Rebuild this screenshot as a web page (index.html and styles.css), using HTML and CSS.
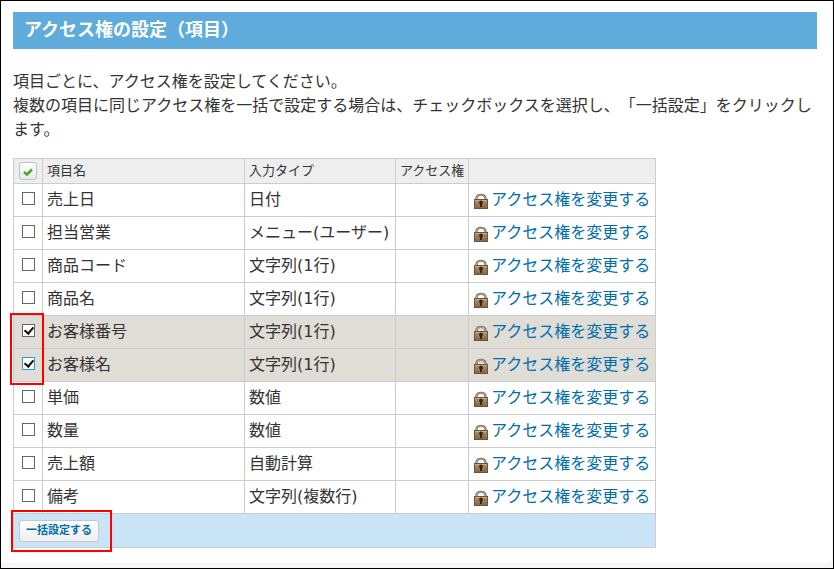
FILE: index.html
```html
<!DOCTYPE html>
<html lang="ja">
<head>
    <meta charset="UTF-8">
    <title>アクセス権の設定（項目）</title>
    <meta name="viewport" content="width=device-width, initial-scale=1.0">
    <link rel="stylesheet" href="styles.css">
</head>
<body>

    <!-- 鍵アイコン -->
    <svg class="icon-defs" aria-hidden="true">
        <defs>
            <linearGradient id="lockBody" x1="0" y1="0" x2="0" y2="1">
                <stop offset="0" stop-color="#b4936c"/>
                <stop offset="1" stop-color="#87643f"/>
            </linearGradient>
            <symbol id="lock" viewBox="0 0 16 16">
                <path d="M3.5 8V5.5C3.5 0.7 12.5 0.7 12.5 5.5V8" fill="none" stroke="#7a6d5c" stroke-width="2.4"/>
                <path d="M3.5 8V5.5C3.5 0.9 12.5 0.9 12.5 5.5V8" fill="none" stroke="#c2b9ac" stroke-width="0.9"/>
                <rect x="1.5" y="6.5" width="13" height="9" fill="url(#lockBody)" stroke="#6e5438"/>
                <path d="M2 7.5H14" stroke="#d0b28b" stroke-width="0.8"/>
                <path d="M8 7.5a2 2 0 0 1 1 3.7V14H7v-2.8A2 2 0 0 1 8 7.5z" fill="#33261a"/>
            </symbol>
        </defs>
    </svg>

    <main class="panel">
        <h1>アクセス権の設定（項目）</h1>

        <p class="description">
            項目ごとに、アクセス権を設定してください。<br>
            複数の項目に同じアクセス権を一括で設定する場合は、チェックボックスを選択し、「一括設定」をクリックします。
        </p>

        <form>
            <table class="fields">
                <colgroup>
                    <col class="col-check">
                    <col class="col-name">
                    <col class="col-type">
                    <col class="col-access">
                    <col class="col-action">
                </colgroup>
                <thead>
                    <tr>
                        <th>
                            <button type="button" class="check-all" id="checkAll" aria-label="すべて選択">
                                <svg width="10" height="8" viewBox="0 0 10 8"><path d="M1 4l3 2.5L9 1.5" fill="none" stroke="#4da61e" stroke-width="2.6"/></svg>
                            </button>
                        </th>
                        <th>項目名</th>
                        <th>入力タイプ</th>
                        <th>アクセス権</th>
                        <th></th>
                    </tr>
                </thead>
                <tbody id="fieldRows"></tbody>
                <tfoot>
                    <tr>
                        <td colspan="5">
                            <button type="button" class="bulk-button">一括設定する</button>
                            <span class="marker marker-button"></span>
                        </td>
                    </tr>
                </tfoot>
            </table>
        </form>
    </main>

    <script>
        const fields = [
            { name: "売上日", type: "日付" },
            { name: "担当営業", type: "メニュー(ユーザー)" },
            { name: "商品コード", type: "文字列(1行)" },
            { name: "商品名", type: "文字列(1行)" },
            { name: "お客様番号", type: "文字列(1行)", checked: true, marker: true },
            { name: "お客様名", type: "文字列(1行)", checked: true, active: true },
            { name: "単価", type: "数値" },
            { name: "数量", type: "数値" },
            { name: "売上額", type: "自動計算" },
            { name: "備考", type: "文字列(複数行)" }
        ];

        const fieldRows = document.getElementById('fieldRows');

        fields.forEach((field, index) => {
            const row = document.createElement('tr');
            row.className = field.checked ? 'selected' : '';
            row.innerHTML = `
                <td class="check">
                    <input type="checkbox" id="field${index}" class="${field.active ? 'active' : ''}" ${field.checked ? 'checked' : ''}>
                    ${field.marker ? '<span class="marker marker-checks"></span>' : ''}
                </td>
                <td><label for="field${index}">${field.name}</label></td>
                <td>${field.type}</td>
                <td></td>
                <td><a href="#"><svg class="lock"><use href="#lock"/></svg>アクセス権を変更する</a></td>
            `;
            fieldRows.appendChild(row);
        });

        const boxes = fieldRows.querySelectorAll('input');

        boxes.forEach(box => {
            box.addEventListener('change', () => {
                box.closest('tr').classList.toggle('selected', box.checked);
            });
        });

        document.getElementById('checkAll').addEventListener('click', () => {
            boxes.forEach(box => {
                box.checked = true;
                box.closest('tr').classList.add('selected');
            });
        });
    </script>

</body>
</html>
```
FILE: styles.css
```css
* {
    box-sizing: border-box;
}

body {
    margin: 0;
    min-height: 100vh;
    padding-bottom: 5px;
    border: 1px solid #000;
    background: #f6f6f6;
    color: #333;
    font-family: "DejaVu Sans", "Noto Sans CJK JP", sans-serif;
    font-size: 16px;
    line-height: 24px;
    text-spacing-trim: space-all;
}

.icon-defs {
    position: absolute;
    width: 0;
    height: 0;
}

.panel {
    background: #fff;
    border-radius: 0 0 6px 0;
    margin-right: 1px;
    padding: 11px 15px 15px 12px;
}

h1 {
    margin: 0 0 21px;
    padding: 6px 11px 7px;
    background: #5eabdc;
    color: #fff;
    font-size: 18px;
    line-height: 24px;
}

.description {
    margin: 0 -1px 16px 0;
}

.fields {
    border-collapse: collapse;
    table-layout: fixed;
    width: 643px;
}

.col-check {
    width: 29px;
}

.col-name {
    width: 202px;
}

.col-type {
    width: 151px;
}

.col-access {
    width: 73px;
}

th,
td {
    height: 33px;
    padding: 0 4px 1px;
    border: 1px solid #ccc;
    text-align: left;
    white-space: nowrap;
}

th {
    height: 25px;
    padding: 0 4px;
    background: #eee;
    font-size: 13px;
    font-weight: normal;
}

.selected td {
    background: #e0dcd6;
}

.fields .check {
    position: relative;
    padding: 0 0 3px;
}

.check-all {
    display: flex;
    align-items: center;
    justify-content: center;
    width: 18px;
    height: 18px;
    margin: 0 auto;
    padding: 2px 0 0;
    border: 1px solid #b5c4c9;
    border-radius: 3px;
    background: linear-gradient(#fff, #e9e9e9);
}

input[type="checkbox"] {
    appearance: none;
    display: block;
    width: 13px;
    height: 13px;
    margin: 0 auto;
    border: 1px solid #666;
    background: #fff;
}

input[type="checkbox"].active {
    border-color: #2a9fdf;
}

input[type="checkbox"]:checked::after {
    content: "";
    box-sizing: border-box;
    display: block;
    width: 6px;
    height: 9px;
    margin: 0 0 0 3px;
    border: solid #111;
    border-width: 0 2px 2px 0;
    transform: rotate(40deg);
}

a {
    display: flex;
    align-items: center;
    gap: 2px;
    color: #006dac;
    text-decoration: none;
}

.lock {
    width: 16px;
    height: 16px;
    margin-top: 3px;
}

tfoot td {
    position: relative;
    height: 34px;
    padding: 0 5px;
    background: #c9e4f6;
}

.bulk-button {
    display: block;
    width: 80px;
    height: 22px;
    padding: 0;
    border: 1px solid #c3c9cd;
    border-radius: 3px;
    background: linear-gradient(#fff, #eee);
    color: #006dac;
    font-family: inherit;
    font-size: 11px;
    font-weight: bold;
    line-height: 20px;
}

/* 赤枠 */
.marker {
    position: absolute;
    border: 2px solid #f00;
    pointer-events: none;
    z-index: 1;
}

.marker-checks {
    top: -3px;
    left: -4px;
    width: 34px;
    height: 72px;
}

.marker-button {
    top: -4px;
    left: -3px;
    width: 101px;
    height: 42px;
}
```
